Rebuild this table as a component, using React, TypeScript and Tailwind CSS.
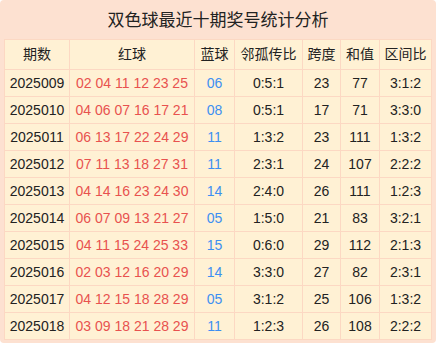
const rows = [
  ["2025009", "02 04 11 12 23 25", "06", "0:5:1", "23", "77", "3:1:2"],
  ["2025010", "04 06 07 16 17 21", "08", "0:5:1", "17", "71", "3:3:0"],
  ["2025011", "06 13 17 22 24 29", "11", "1:3:2", "23", "111", "1:3:2"],
  ["2025012", "07 11 13 18 27 31", "11", "2:3:1", "24", "107", "2:2:2"],
  ["2025013", "04 14 16 23 24 30", "14", "2:4:0", "26", "111", "1:2:3"],
  ["2025014", "06 07 09 13 21 27", "05", "1:5:0", "21", "83", "3:2:1"],
  ["2025015", "04 11 15 24 25 33", "15", "0:6:0", "29", "112", "2:1:3"],
  ["2025016", "02 03 12 16 20 29", "14", "3:3:0", "27", "82", "2:3:1"],
  ["2025017", "04 12 15 18 28 29", "05", "3:1:2", "25", "106", "1:3:2"],
  ["2025018", "03 09 18 21 28 29", "11", "1:2:3", "26", "108", "2:2:2"],
];

const headers = ["期数", "红球", "蓝球", "邻孤传比", "跨度", "和值", "区间比"];
const widths = ["w-[65px]", "w-[125px]", "w-[40px]", "w-[68px]", "w-[38px]", "w-[39px]", "w-[52px]"];

export default function App() {
  return (
    <div className="w-[436px] h-[343px] bg-[#fde1d1] rounded-[4px] pt-[6px] px-[4px] font-['Liberation_Sans','Noto_Sans_CJK_SC',sans-serif] text-[#222]">
      <div className="h-[33px] flex items-center justify-center text-[17px] leading-none pb-[5px]">
        双色球最近十期奖号统计分析
      </div>
      <table className="w-[427px] table-fixed border-collapse bg-[#fff1d4] text-[14px] text-center">
        <colgroup>
          {widths.map((w, i) => (
            <col key={i} className={w} />
          ))}
        </colgroup>
        <thead>
          <tr className="h-[30px]">
            {headers.map((h) => (
              <th key={h} className="font-normal border border-[#fcd8c3] p-0">
                {h}
              </th>
            ))}
          </tr>
        </thead>
        <tbody>
          {rows.map((r) => (
            <tr key={r[0]} className="h-[27px]">
              <td className="border border-[#fcd8c3] p-0">{r[0]}</td>
              <td className="border border-[#fcd8c3] p-0 text-[#e8524f]">{r[1]}</td>
              <td className="border border-[#fcd8c3] p-0 text-[#3d8ff2]">{r[2]}</td>
              <td className="border border-[#fcd8c3] p-0">{r[3]}</td>
              <td className="border border-[#fcd8c3] p-0">{r[4]}</td>
              <td className="border border-[#fcd8c3] p-0">{r[5]}</td>
              <td className="border border-[#fcd8c3] p-0">{r[6]}</td>
            </tr>
          ))}
        </tbody>
      </table>
    </div>
  );
}
